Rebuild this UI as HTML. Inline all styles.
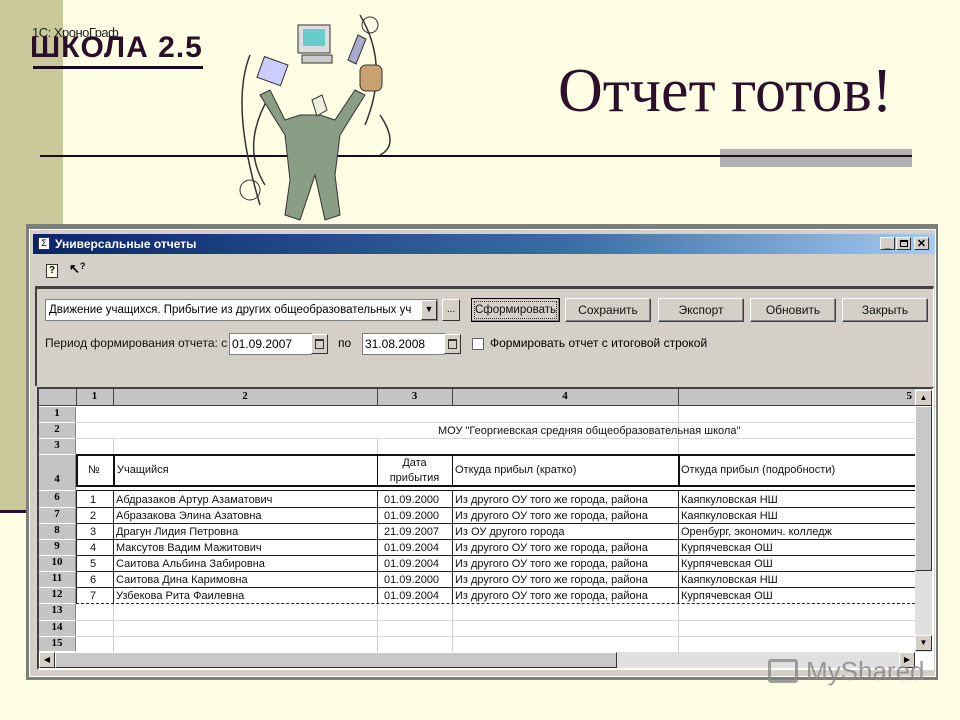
<!DOCTYPE html>
<html><head><meta charset="utf-8"><style>
*{margin:0;padding:0;box-sizing:border-box}
body{width:960px;height:720px;position:relative;background:#fefee4;overflow:hidden;font-family:"Liberation Sans",sans-serif}
.a{position:absolute}
.t{position:absolute;font-size:11px;color:#111;white-space:nowrap;line-height:16px}
.rh{position:absolute;left:39px;width:37px;background:#c4c4c4;border-bottom:1px solid #fff;border-right:1px solid #888;font:bold 11px "Liberation Serif",serif;text-align:center;color:#000}
.btn{position:absolute;top:298px;height:24px;background:#d4d0c8;border:1px solid #fff;border-right-color:#404040;border-bottom-color:#404040;box-shadow:inset -1px -1px 0 #808080;font-size:12px;text-align:center;line-height:22px;color:#111}
.hl{position:absolute;left:76px;width:839px;height:1px;background:#d8d8d8}
.bl{position:absolute;height:1px;background:#222}
.vl{position:absolute;width:1px;background:#d0d0d0}
</style></head><body>
<div class="a" style="left:0;top:0;width:63px;height:510px;background:#cbc89c"></div>
<div class="a" style="left:0;top:510px;width:30px;height:3px;background:#2a1030"></div>
<div class="a" style="left:32px;top:25px;font-size:13px;color:#222;letter-spacing:-0.5px">1С: ХроноГраф</div>
<div class="a" style="left:30px;top:31px;font:bold 30px 'Liberation Sans',sans-serif;color:#2a0f2a;letter-spacing:1px">ШКОЛА 2.5</div>
<div class="a" style="left:33px;top:66px;width:170px;height:3px;background:#1a0a1a"></div>
<div class="a" style="left:558px;top:56px;font:62px 'Liberation Serif',serif;color:#2c0f2c">Отчет готов!</div>
<div class="a" style="left:720px;top:149px;width:192px;height:18px;background:#b0b0b0"></div>
<div class="a" style="left:40px;top:155px;width:872px;height:2px;background:#1a0a1a"></div>
<svg class="a" style="left:230px;top:5px" width="170" height="220" viewBox="0 0 170 220">
<path d="M40 90 Q10 140 35 180 M130 10 Q160 60 135 120 M20 50 Q0 100 30 200 M150 150 Q170 140 150 110" stroke="#333" fill="none" stroke-width="1.5"/>
<circle cx="20" cy="185" r="10" stroke="#333" fill="none"/>
<circle cx="140" cy="20" r="8" stroke="#333" fill="none"/>
<rect x="68" y="20" width="32" height="28" fill="#ddd" stroke="#333"/><rect x="73" y="24" width="22" height="17" fill="#6cc"/>
<rect x="72" y="50" width="30" height="8" fill="#ccc" stroke="#333"/>
<rect x="30" y="55" width="25" height="22" fill="#ccf" stroke="#333" transform="rotate(20 42 66)"/>
<rect x="130" y="60" width="22" height="26" rx="6" fill="#c9a070" stroke="#333"/>
<path d="M118 55 l10 -25 l8 4 l-10 25z" fill="#aac" stroke="#333"/>
<path d="M30 90 L55 130 L60 175 L55 210 L70 215 L85 170 L95 215 L110 210 L105 170 L110 130 L135 90 L125 85 L105 115 L90 110 L70 110 L55 115 L40 85z" fill="#8a9e86" stroke="#333"/>
<path d="M82 95 l10 -5 l5 15 l-10 6z" fill="#eed" stroke="#333"/>
</svg>
<!-- window -->
<div class="a" style="left:26px;top:224px;width:912px;height:456px;background:#7d807a"></div>
<div class="a" style="left:29px;top:229px;width:907px;height:448px;background:#d4d0c8;border:1px solid #fff"></div>
<div class="a" style="left:33px;top:234px;width:902px;height:20px;background:linear-gradient(90deg,#0a246a,#3a6ea5 60%,#a6caf0)"></div>
<div class="a" style="left:38px;top:237px;width:12px;height:13px;background:#fff;border:1px solid #333;font-size:9px;line-height:11px;text-align:center">Σ</div>
<div class="a" style="left:55px;top:235px;font:bold 12px 'Liberation Sans',sans-serif;color:#fff;line-height:18px">Универсальные отчеты</div>
<div class="a" style="left:880px;top:237px;width:15px;height:13px;background:#d4d0c8;border:1px solid #fff;border-right-color:#333;border-bottom-color:#333;font:bold 10px sans-serif;text-align:center;line-height:14px">_</div>
<div class="a" style="left:896px;top:237px;width:15px;height:13px;background:#d4d0c8;border:1px solid #fff;border-right-color:#333;border-bottom-color:#333"><div class="a" style="left:3px;top:2px;width:8px;height:7px;border:1px solid #000;border-top-width:2px"></div></div>
<div class="a" style="left:914px;top:237px;width:15px;height:13px;background:#d4d0c8;border:1px solid #fff;border-right-color:#333;border-bottom-color:#333;font:bold 11px sans-serif;text-align:center;line-height:12px">✕</div>
<div class="a" style="left:46px;top:264px;width:12px;height:14px;border:1px solid #333;background:#ffe;font:bold 10px sans-serif;text-align:center;line-height:12px">?</div>
<div class="a" style="left:69px;top:261px;font:bold 13px sans-serif;color:#000">↖<span style="font-size:9px;vertical-align:top">?</span></div>
<!-- panel -->
<div class="a" style="left:35px;top:286px;width:899px;height:100px;border-top:3px solid #404040;border-left:2px solid #404040;border-right:1px solid #fff;background:#d4d0c8"></div>
<div class="a" style="left:45px;top:299px;width:393px;height:22px;background:#fff;border:1px solid #808080;font-size:11.5px;line-height:20px;padding-left:3px;overflow:hidden;white-space:nowrap">Движение учащихся. Прибытие из других общеобразовательных уч</div>
<div class="a" style="left:421px;top:300px;width:16px;height:20px;background:#d4d0c8;border:1px solid #fff;border-right-color:#333;border-bottom-color:#333;font-size:9px;text-align:center;line-height:16px">▼</div>
<div class="a" style="left:442px;top:299px;width:18px;height:22px;background:#d4d0c8;border:1px solid #fff;border-right-color:#333;border-bottom-color:#333;font-size:10px;text-align:center;line-height:20px">...</div>
<div class="btn" style="left:471px;width:89px;border:1px solid #000;outline:1px dotted #333;outline-offset:-4px;font-size:11.5px">Сформировать</div>
<div class="btn" style="left:565px;width:86px">Сохранить</div>
<div class="btn" style="left:658px;width:86px">Экспорт</div>
<div class="btn" style="left:750px;width:86px">Обновить</div>
<div class="btn" style="left:842px;width:86px">Закрыть</div>
<div class="a" style="left:45px;top:336px;font-size:12px;color:#111">Период формирования отчета: с</div>
<div class="a" style="left:229px;top:333px;width:83px;height:22px;background:#fff;border:1px solid #808080;font-size:12px;line-height:20px;padding-left:2px">01.09.2007</div>
<div class="a" style="left:311px;top:334px;width:17px;height:20px;background:#d4d0c8;border:1px solid #fff;border-right-color:#333;border-bottom-color:#333"><div class="a" style="left:3px;top:4px;width:9px;height:10px;border:1px solid #333;border-top-width:2px"></div></div>
<div class="a" style="left:338px;top:336px;font-size:12px">по</div>
<div class="a" style="left:362px;top:333px;width:83px;height:22px;background:#fff;border:1px solid #808080;font-size:12px;line-height:20px;padding-left:2px">31.08.2008</div>
<div class="a" style="left:444px;top:334px;width:17px;height:20px;background:#d4d0c8;border:1px solid #fff;border-right-color:#333;border-bottom-color:#333"><div class="a" style="left:3px;top:4px;width:9px;height:10px;border:1px solid #333;border-top-width:2px"></div></div>
<div class="a" style="left:472px;top:338px;width:12px;height:12px;background:#fff;border:1px solid #666"></div>
<div class="a" style="left:490px;top:336px;font-size:12px">Формировать отчет с итоговой строкой</div>
<!-- grid -->
<div class="a" style="left:37px;top:387px;width:897px;height:283px;border:2px solid #404040;border-right-color:#fff;border-bottom-color:#fff;background:#fff"></div>
<div class="a" style="left:39px;top:389px;width:876px;height:17px;background:#c4c4c4;border-bottom:1px solid #444"></div>
<div class="a" style="left:76px;top:389px;width:1px;height:17px;background:#444"></div>
<div class="a" style="left:113px;top:389px;width:1px;height:17px;background:#444"></div>
<div class="a" style="left:377px;top:389px;width:1px;height:17px;background:#444"></div>
<div class="a" style="left:452px;top:389px;width:1px;height:17px;background:#444"></div>
<div class="a" style="left:678px;top:389px;width:1px;height:17px;background:#444"></div>
<div class="a" style="top:390px;left:76px;width:37px;text-align:center;font:bold 11px 'Liberation Serif',serif">1</div>
<div class="a" style="top:390px;left:113px;width:264px;text-align:center;font:bold 11px 'Liberation Serif',serif">2</div>
<div class="a" style="top:390px;left:377px;width:75px;text-align:center;font:bold 11px 'Liberation Serif',serif">3</div>
<div class="a" style="top:390px;left:452px;width:226px;text-align:center;font:bold 11px 'Liberation Serif',serif">4</div>
<div class="a" style="top:390px;left:678px;width:234px;text-align:right;font:bold 11px 'Liberation Serif',serif">5</div>
<!-- row headers -->
<div class="rh" style="top:407px;height:16px">1</div>
<div class="rh" style="top:423px;height:16px">2</div>
<div class="rh" style="top:439px;height:16px">3</div>
<div class="rh" style="top:455px;height:36px;line-height:48px">4</div>
<div class="rh" style="top:491px;height:17px">6</div>
<div class="rh" style="top:508px;height:16px">7</div>
<div class="rh" style="top:524px;height:16px">8</div>
<div class="rh" style="top:540px;height:16px">9</div>
<div class="rh" style="top:556px;height:16px">10</div>
<div class="rh" style="top:572px;height:16px">11</div>
<div class="rh" style="top:588px;height:16px">12</div>
<div class="rh" style="top:604px;height:17px">13</div>
<div class="rh" style="top:621px;height:16px">14</div>
<div class="rh" style="top:637px;height:15px">15</div>
<!-- light grid -->
<div class="hl" style="top:422px"></div><div class="hl" style="top:438px"></div>
<div class="hl" style="top:620px"></div><div class="hl" style="top:636px"></div>
<div class="vl" style="left:113px;top:439px;height:16px"></div>
<div class="vl" style="left:377px;top:439px;height:16px"></div>
<div class="vl" style="left:678px;top:407px;height:48px"></div>
<div class="vl" style="left:113px;top:604px;height:48px"></div>
<div class="vl" style="left:377px;top:604px;height:48px"></div>
<div class="vl" style="left:452px;top:604px;height:48px"></div>
<div class="vl" style="left:678px;top:604px;height:48px"></div>
<div class="t" style="left:438px;top:423px">МОУ "Георгиевская средняя общеобразовательная школа"</div>
<!-- header row 4 -->
<div class="a" style="left:76px;top:454px;width:839px;height:2px;background:#111"></div>
<div class="a" style="left:76px;top:485px;width:839px;height:2px;background:#111"></div>
<div class="a" style="left:76px;top:490px;width:839px;height:1px;background:#111"></div>
<div class="a" style="left:76px;top:455px;width:2px;height:32px;background:#111"></div>
<div class="a" style="left:113px;top:455px;width:2px;height:32px;background:#111"></div>
<div class="a" style="left:377px;top:455px;width:1px;height:32px;background:#111"></div>
<div class="a" style="left:452px;top:455px;width:1px;height:32px;background:#111"></div>
<div class="a" style="left:678px;top:455px;width:2px;height:32px;background:#111"></div>
<div class="t" style="left:88px;top:462px">№</div>
<div class="t" style="left:117px;top:462px">Учащийся</div>
<div class="t" style="left:377px;top:456px;width:75px;text-align:center;line-height:15px;white-space:normal">Дата прибытия</div>
<div class="t" style="left:455px;top:462px">Откуда прибыл (кратко)</div>
<div class="t" style="left:681px;top:462px">Откуда прибыл (подробности)</div>
<!-- data rows -->
<div class="a" style="left:76px;top:491px;width:839px;height:113px;border-left:1px solid #222">
<div class="a" style="left:36px;top:0;width:1px;height:113px;background:#222"></div>
<div class="a" style="left:300px;top:0;width:1px;height:113px;background:#222"></div>
<div class="a" style="left:375px;top:0;width:1px;height:113px;background:#222"></div>
<div class="a" style="left:601px;top:0;width:1px;height:113px;background:#222"></div>
</div>
<div class="bl" style="left:76px;width:839px;top:507px"></div>
<div class="bl" style="left:76px;width:839px;top:523px"></div>
<div class="bl" style="left:76px;width:839px;top:539px"></div>
<div class="bl" style="left:76px;width:839px;top:555px"></div>
<div class="bl" style="left:76px;width:839px;top:571px"></div>
<div class="bl" style="left:76px;width:839px;top:587px"></div>
<div class="a" style="left:76px;width:839px;top:603px;border-top:1px dashed #222"></div>
<div class="a" style="left:76px;top:492px;width:839px;line-height:16px;font-size:11px;color:#111">
<div style="height:16px;position:relative"><span class="t" style="left:14px">1</span><span class="t" style="left:40px">Абдразаков Артур Азаматович</span><span class="t" style="left:308px">01.09.2000</span><span class="t" style="left:379px">Из другого ОУ того же города, района</span><span class="t" style="left:605px">Каяпкуловская НШ</span></div>
<div style="height:16px;position:relative"><span class="t" style="left:14px">2</span><span class="t" style="left:40px">Абразакова Элина Азатовна</span><span class="t" style="left:308px">01.09.2000</span><span class="t" style="left:379px">Из другого ОУ того же города, района</span><span class="t" style="left:605px">Каяпкуловская НШ</span></div>
<div style="height:16px;position:relative"><span class="t" style="left:14px">3</span><span class="t" style="left:40px">Драгун Лидия Петровна</span><span class="t" style="left:308px">21.09.2007</span><span class="t" style="left:379px">Из ОУ другого города</span><span class="t" style="left:605px">Оренбург, экономич. колледж</span></div>
<div style="height:16px;position:relative"><span class="t" style="left:14px">4</span><span class="t" style="left:40px">Максутов Вадим Мажитович</span><span class="t" style="left:308px">01.09.2004</span><span class="t" style="left:379px">Из другого ОУ того же города, района</span><span class="t" style="left:605px">Курпячевская ОШ</span></div>
<div style="height:16px;position:relative"><span class="t" style="left:14px">5</span><span class="t" style="left:40px">Саитова Альбина Забировна</span><span class="t" style="left:308px">01.09.2004</span><span class="t" style="left:379px">Из другого ОУ того же города, района</span><span class="t" style="left:605px">Курпячевская ОШ</span></div>
<div style="height:16px;position:relative"><span class="t" style="left:14px">6</span><span class="t" style="left:40px">Саитова Дина Каримовна</span><span class="t" style="left:308px">01.09.2000</span><span class="t" style="left:379px">Из другого ОУ того же города, района</span><span class="t" style="left:605px">Каяпкуловская НШ</span></div>
<div style="height:16px;position:relative"><span class="t" style="left:14px">7</span><span class="t" style="left:40px">Узбекова Рита Фаилевна</span><span class="t" style="left:308px">01.09.2004</span><span class="t" style="left:379px">Из другого ОУ того же города, района</span><span class="t" style="left:605px">Курпячевская ОШ</span></div>
</div>
<!-- scrollbars -->
<div class="a" style="left:915px;top:389px;width:17px;height:263px;background:#e0e0e0"></div>
<div class="a" style="left:915px;top:406px;width:17px;height:165px;background:#c8c8c8;border:1px solid #fff;border-right-color:#333;border-bottom-color:#333"></div>
<div class="a" style="left:915px;top:390px;width:17px;height:16px;background:#d4d0c8;border:1px solid #fff;border-right-color:#333;border-bottom-color:#333;font-size:8px;text-align:center;line-height:14px">▲</div>
<div class="a" style="left:915px;top:635px;width:17px;height:16px;background:#d4d0c8;border:1px solid #fff;border-right-color:#333;border-bottom-color:#333;font-size:8px;text-align:center;line-height:14px">▼</div>
<div class="a" style="left:39px;top:652px;width:876px;height:16px;background:#e0e0e0"></div>
<div class="a" style="left:55px;top:652px;width:562px;height:16px;background:#c8c8c8;border:1px solid #fff;border-right-color:#333;border-bottom-color:#333"></div>
<div class="a" style="left:39px;top:652px;width:16px;height:16px;background:#d4d0c8;border:1px solid #fff;border-right-color:#333;border-bottom-color:#333;font-size:8px;text-align:center;line-height:14px">◀</div>
<div class="a" style="left:899px;top:652px;width:16px;height:16px;background:#d4d0c8;border:1px solid #fff;border-right-color:#333;border-bottom-color:#333;font-size:8px;text-align:center;line-height:14px">▶</div>
<!-- watermark -->
<div class="a" style="left:768px;top:659px;width:30px;height:24px;border:3px solid #888;border-radius:3px;opacity:.8"></div>
<div class="a" style="left:806px;top:656px;font:26px 'Liberation Sans',sans-serif;color:#8a8a8a;opacity:.85">MyShared</div>
</body></html>
